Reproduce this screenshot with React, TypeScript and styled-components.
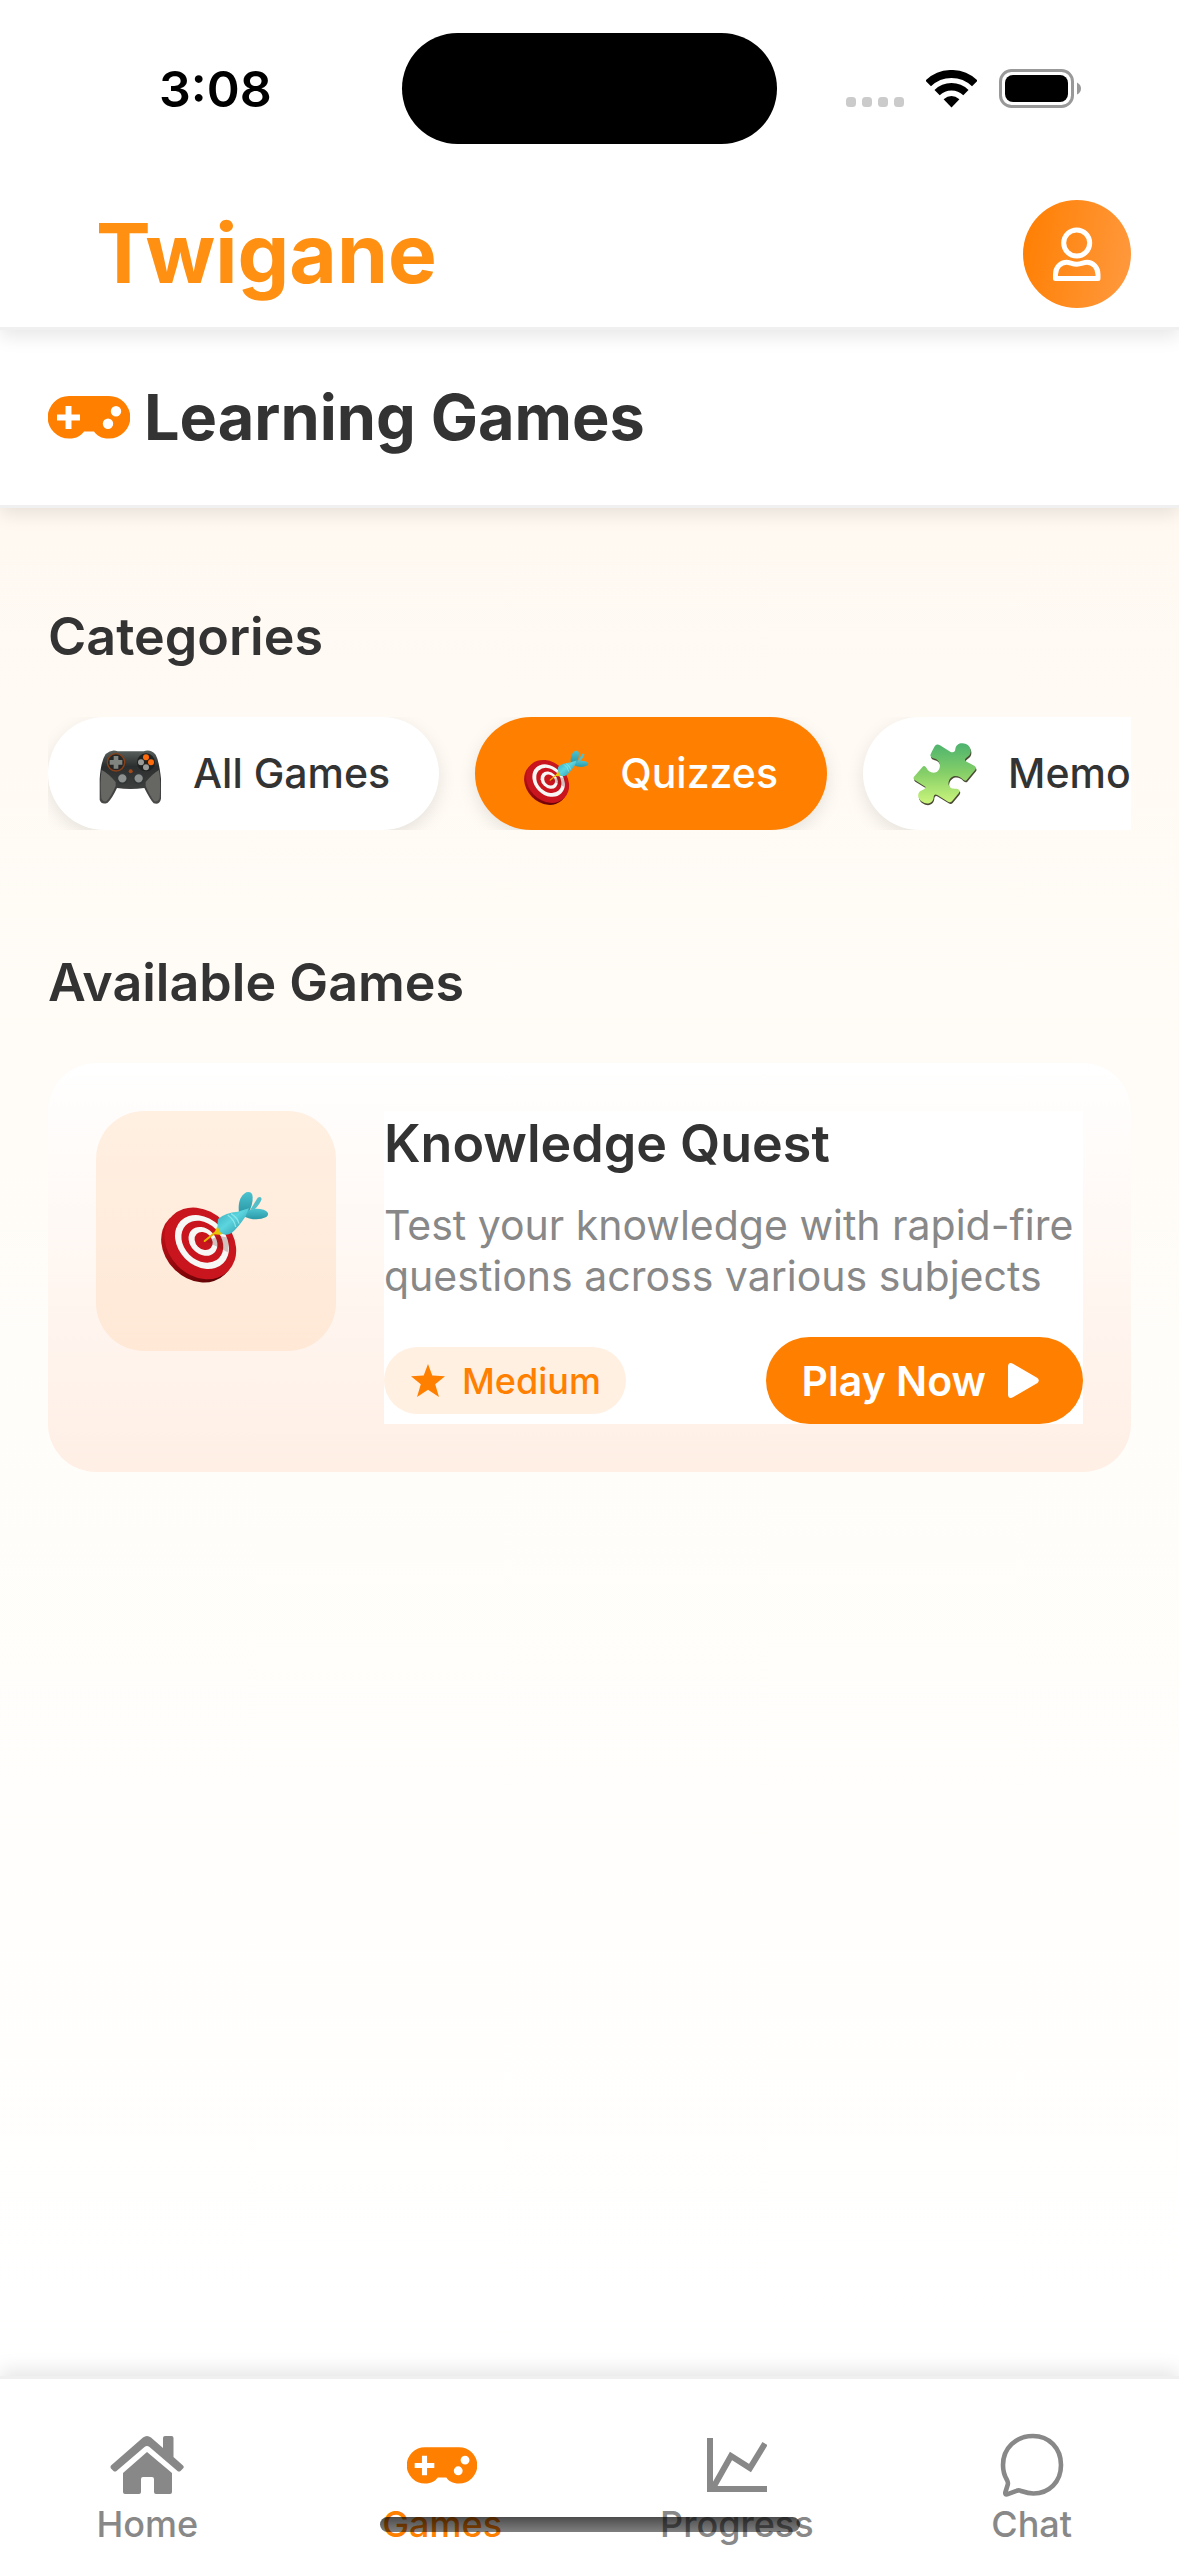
import React, { useState } from "react";
import styled, { createGlobalStyle, css } from "styled-components";

const color = {
  brand: "#ff7f00",
  logo: "#ff9012",
  ink: "#333333",
  muted: "#888888",
  line: "#f0f0f0",
  tint: "#fff0e2",
};

const GlobalStyle = createGlobalStyle`
  *, *::before, *::after { box-sizing: border-box; }
  body { margin: 0; background: #ffffff; }
  body, button { font-family: Inter, "Noto Sans", "Liberation Sans", sans-serif; }
  h1, h2, h3, p { margin: 0; }
  button { border: 0; padding: 0; cursor: pointer; }
  svg { display: block; flex: none; }
`;

const Screen = styled.div`
  display: flex;
  flex-direction: column;
  min-height: 100vh;
  background: #ffffff;
  color: ${color.ink};
`;

const StatusBar = styled.div`
  position: relative;
  z-index: 3;
  display: grid;
  grid-template-columns: 1fr 375px 1fr;
  align-items: center;
  height: 177px;
  background: #ffffff;
`;

const Clock = styled.time`
  padding-left: 159px;
  font-size: 50px;
  font-weight: 600;
  line-height: 60px;
  color: #000000;
`;

const Island = styled.div`
  height: 111px;
  border-radius: 56px;
  background: #000000;
`;

const StatusIcons = styled.div`
  display: flex;
  justify-content: flex-end;
  align-items: flex-end;
  gap: 22px;
  padding-right: 98px;
`;

const bar = css`
  position: relative;
  z-index: 1;
  display: flex;
  align-items: center;
  background: #ffffff;
  border-bottom: 3px solid ${color.line};
  box-shadow: 0 6px 18px rgba(0, 0, 0, 0.1);
`;

const Header = styled.header`
  ${bar}
  z-index: 2;
  justify-content: space-between;
  padding: 23px 48px 19px 96px;
`;

const Brand = styled.span`
  font-size: 82px;
  font-weight: 700;
  line-height: 96px;
  color: ${color.logo};
`;

const Avatar = styled.button`
  width: 108px;
  height: 108px;
  border-radius: 50%;
  background: linear-gradient(100deg, #ff7e00, #ff9a40);
`;

const TitleBar = styled.div`
  ${bar}
  gap: 14px;
  padding: 48px;
`;

const TitleIcon = styled.span`
  color: ${color.brand};
`;

const PageTitle = styled.h1`
  font-size: 63px;
  font-weight: 700;
  line-height: 79px;
`;

const Content = styled.main`
  display: flex;
  flex-direction: column;
  flex: 1;
  gap: 120px;
  padding: 96px 48px;
  background: linear-gradient(180deg, #fff9f2, #fffdf9 45%, #ffffff);
`;

const Section = styled.section`
  display: flex;
  flex-direction: column;
  gap: 48px;
  min-width: 0;
`;

const SectionTitle = styled.h2`
  font-size: 52px;
  font-weight: 600;
  line-height: 65px;
`;

const PillRow = styled.div`
  display: flex;
  gap: 36px;
  overflow: hidden;
`;

const Pill = styled.button<{ $active: boolean }>`
  display: flex;
  flex: none;
  align-items: center;
  gap: 30px;
  height: 113px;
  padding: 0 49px;
  border-radius: 57px;
  background: ${(p) => (p.$active ? color.brand : "#ffffff")};
  color: ${(p) => (p.$active ? "#ffffff" : color.ink)};
  box-shadow: 0 6px 18px rgba(0, 0, 0, 0.1);
  font-size: 41px;
  font-weight: 500;
  line-height: 51px;
`;

const Card = styled.article`
  display: flex;
  align-items: flex-start;
  gap: 48px;
  padding: 48px;
  border-radius: 48px;
  background: linear-gradient(180deg, #ffffff, #ffefe5);
`;

const Thumb = styled.div`
  display: flex;
  flex: none;
  align-items: center;
  justify-content: center;
  width: 240px;
  height: 240px;
  border-radius: 48px;
  background: linear-gradient(180deg, #fff0e2, #ffe8d6);
`;

const Info = styled.div`
  flex: 1;
  min-width: 0;
  background: #ffffff;
`;

const GameTitle = styled.h3`
  font-size: 52px;
  font-weight: 600;
  line-height: 65px;
`;

const Description = styled.p`
  margin: 24px 0 35px;
  font-size: 41px;
  line-height: 51px;
  color: ${color.muted};
`;

const MetaRow = styled.div`
  display: flex;
  align-items: center;
  justify-content: space-between;
`;

const Badge = styled.span`
  display: flex;
  align-items: center;
  gap: 17px;
  height: 67px;
  padding: 0 25px 0 27px;
  border-radius: 36px;
  background: ${color.tint};
  color: ${color.brand};
  font-size: 36px;
  font-weight: 500;
`;

const PlayButton = styled.button`
  display: flex;
  align-items: center;
  gap: 22px;
  height: 87px;
  padding: 0 44px 0 36px;
  border-radius: 44px;
  background: ${color.brand};
  color: #ffffff;
  font-size: 41px;
  font-weight: 600;
`;

const TabBar = styled.nav`
  position: relative;
  z-index: 1;
  display: grid;
  grid-template-columns: repeat(4, 1fr);
  padding: 54px 0 11px;
  background: #ffffff;
  border-top: 3px solid ${color.line};
  box-shadow: 0 -6px 18px rgba(0, 0, 0, 0.1);
`;

const Tab = styled.a<{ $active: boolean }>`
  display: flex;
  flex-direction: column;
  align-items: center;
  gap: 6px;
  color: ${(p) => (p.$active ? color.brand : color.muted)};
  font-size: 36px;
  font-weight: 500;
  line-height: 42px;
  text-decoration: none;
`;

const TabIcon = styled.span`
  display: flex;
  align-items: center;
  height: 64px;
`;

const HomeIndicator = styled.div`
  position: absolute;
  bottom: 24px;
  left: 50%;
  width: 420px;
  height: 15px;
  margin-left: -210px;
  border-radius: 8px;
  background: linear-gradient(180deg, rgba(0, 0, 0, 0.7), rgba(0, 0, 0, 0.5));
`;

const SignalDots = () => (
  <svg width="58" height="11" viewBox="0 0 58 11" fill="#cbcbcb">
    {[0, 16, 32, 48].map((x) => (
      <rect key={x} x={x} y="0" width="10" height="10" rx="3.5" />
    ))}
  </svg>
);

const Wifi = () => (
  <svg width="51" height="38" viewBox="0 0 51 38" fill="none" stroke="#000">
    <path d="M2.2 13.4A33.5 33.5 0 0 1 48.8 13.4" strokeWidth="8" />
    <path d="M11.1 22.6A20.7 20.7 0 0 1 39.9 22.6" strokeWidth="7.5" />
    <path d="M25.5 37.5L17.6 29.3Q25.5 22.5 33.4 29.3Z" fill="#000" stroke="none" />
  </svg>
);

const Battery = () => (
  <svg width="82" height="39" viewBox="0 0 82 39">
    <rect x="1.5" y="1.5" width="72" height="36" rx="11" fill="none" stroke="#999" strokeWidth="3" />
    <rect x="6" y="6" width="63" height="27" rx="8" />
    <path d="M78 13.5Q82 15.5 82 19.5T78 25.5Z" fill="#999" />
  </svg>
);

const UserIcon = () => (
  <svg width="108" height="108" viewBox="0 0 108 108" fill="none" stroke="#fff" strokeWidth="5" strokeLinejoin="round">
    <circle cx="53.7" cy="43" r="13" />
    <path d="M32.5 78.5V74.5C32.5 67 38 62.3 43.5 62.3C47 62.3 49 64.2 53.7 64.2C58.4 64.2 60.4 62.3 64 62.3C69.5 62.3 75 67 75 74.5V78.5Z" />
  </svg>
);

const ControllerIcon = ({ width, height }: { width: number; height: number }) => (
  <svg width={width} height={height} viewBox="0 0 82 43" fill="currentColor">
    <path
      fillRule="evenodd"
      d="M21 0H61A21.3 21.3 0 0 1 61 42.6C53 42.6 49 39.5 46 35.5H36C33 39.5 29 42.6 21 42.6A21.3 21.3 0 0 1 21 0ZM17.5 10V18.5H9V24.5H17.5V33H23.5V24.5H32V18.5H23.5V10ZM68 10A5.2 5.2 0 1 0 68 20.4A5.2 5.2 0 1 0 68 10ZM60 22.5A5.2 5.2 0 1 0 60 32.9A5.2 5.2 0 1 0 60 22.5Z"
    />
  </svg>
);

const HomeIcon = () => (
  <svg width="74" height="60" viewBox="0 0 74 60" fill="currentColor">
    <path d="M1 30.5L33 2.5Q37 -.5 41 2.5L53 13V3Q53 1 55 1H61.5Q63.5 1 63.5 3V22L73 30.5Q74.5 32 73 33.5L70.5 36Q69 37 67.5 36L39.5 12Q37 10 34.5 12L6.5 36Q5 37 3.5 36L1 33.5Q0 32 1 30.5Z" />
    <path d="M37 17L62 38V57Q62 59 60 59H46Q44 59 44 57V44Q44 42 42 42H33Q31 42 31 44V57Q31 59 29 59H15Q13 59 13 57V38Z" />
  </svg>
);

const ChartIcon = () => (
  <svg width="60" height="60" viewBox="0 0 60 60" fill="none" stroke="currentColor" strokeWidth="6">
    <path d="M3 3V54H60" />
    <path d="M6.5 52L24 21L43 33L58 8.5" />
  </svg>
);

const ChatIcon = () => (
  <svg width="64" height="64" viewBox="0 0 64 64" fill="none" stroke="currentColor" strokeWidth="4.6" strokeLinejoin="round">
    <path d="M33 3C49 3 61 15 61 32C61 49 49 60.5 33.5 60.5C27 60.5 23 58.5 20.5 57.7Q18.5 57 16.5 57.8L7 61.3Q5 61.8 5.3 59.5L7.8 51.5Q8.3 49.5 7 47C4 42 3 37 3 32C3 15 16 3 33 3Z" />
  </svg>
);

const StarIcon = () => (
  <svg width="34" height="33" viewBox="0 0 34 33" fill="currentColor">
    <path d="M17 0L21.3 11.5L34 12.3L24.2 20.2L28 33L17 25.7L6 33L9.8 20.2L0 12.3L12.7 11.5Z" />
  </svg>
);

const PlayIcon = () => (
  <svg width="31" height="35" viewBox="0 0 31 35" fill="currentColor">
    <path d="M0 4Q0 -1.5 5 .8L29.5 15Q32 17.5 29.5 20L5 34.2Q0 36.5 0 31Z" />
  </svg>
);

const GamepadEmoji = () => (
  <svg width="66" height="66" viewBox="36 37 198 198" role="img" aria-label="gamepad">
    <defs>
      <linearGradient id="padBody" x1="0" y1="0" x2="0" y2="1">
        <stop offset="0" stopColor="#58605c" />
        <stop offset=".3" stopColor="#2b2e2e" />
        <stop offset="1" stopColor="#4a4b49" />
      </linearGradient>
    </defs>
    <path
      fill="url(#padBody)"
      d="M62 76Q80 60 98 68H176Q196 60 212 78Q222 96 228 150V210Q224 230 206 224Q196 214 178 178Q136 184 96 178Q80 212 68 222Q50 230 44 214V150Q48 96 62 76Z"
    />
    <path fill="#666762" d="M50 124Q70 134 92 160V172Q78 204 64 218Q52 220 49 208Q44 160 50 124ZM222 124Q204 134 182 160V172Q196 204 208 218Q220 220 224 208Q228 160 222 124Z" />
    <circle cx="93" cy="101" r="26" fill="#252727" stroke="#884019" strokeWidth="4" />
    <path fill="#818580" d="M86 82H100V94H112V108H100V120H86V108H74V94H86Z" />
    <circle cx="183" cy="101" r="27" fill="#202222" />
    <circle cx="183" cy="86" r="9" fill="#ff6b0b" />
    <circle cx="198" cy="101" r="9" fill="#ff6b0b" />
    <circle cx="168" cy="101" r="9" fill="#999b99" />
    <circle cx="183" cy="116" r="9" fill="#999b99" />
    <circle cx="137" cy="128" r="6" fill="#a54818" />
    <circle cx="112" cy="149" r="15" fill="#8d9290" stroke="#333636" strokeWidth="5" />
    <circle cx="161" cy="149" r="15" fill="#8d9290" stroke="#333636" strokeWidth="5" />
  </svg>
);

const TargetEmoji = ({ size, id }: { size: number; id: string }) => (
  <svg width={size} height={size} viewBox="32 -9 330 330" role="img" aria-label="dart on a target">
    <defs>
      <linearGradient id={`${id}-dart`} x1="0" y1="0" x2="1" y2="1">
        <stop offset="0" stopColor="#35aab8" />
        <stop offset=".45" stopColor="#5cd5df" />
        <stop offset="1" stopColor="#238b9c" />
      </linearGradient>
      <linearGradient id={`${id}-fin`} x1="0" y1="0" x2="0" y2="1">
        <stop offset="0" stopColor="#4cc3cf" />
        <stop offset="1" stopColor="#2b98a6" />
      </linearGradient>
      <linearGradient id={`${id}-rim`} x1="0" y1="0" x2="1" y2="0">
        <stop offset="0" stopColor="#c01219" />
        <stop offset=".6" stopColor="#860609" />
        <stop offset="1" stopColor="#5c0507" />
      </linearGradient>
    </defs>
    <ellipse cx="140" cy="203" rx="118" ry="96" transform="rotate(45 140 203)" fill={`url(#${id}-rim)`} />
    <ellipse cx="150" cy="193" rx="118" ry="96" transform="rotate(45 150 193)" fill="#c9151d" />
    <ellipse cx="155" cy="189" rx="90" ry="71" transform="rotate(45 155 189)" fill="#f7f7f5" />
    <ellipse cx="156" cy="188" rx="70" ry="55" transform="rotate(45 156 188)" fill="#c9151d" />
    <ellipse cx="158" cy="187" rx="48" ry="38" transform="rotate(45 158 187)" fill="#f7f7f5" />
    <ellipse cx="160" cy="186" rx="30" ry="24" transform="rotate(45 160 186)" fill="#c9151d" />
    <path d="M168 188L206 170L240 178L232 220Q206 204 168 188Z" fill="#651b1d" opacity=".25" />
    <path d="M163 186L200 156" stroke="#e7b600" strokeWidth="6" strokeLinecap="round" />
    <path d="M190 166L204 136L220 164L208 167Z" fill="#e8c307" />
    <path d="M300 92L322 56Q332 50 334 60Q330 74 312 92Z" fill="#55bfc9" />
    <path d="M266 102Q260 56 288 40Q306 36 307 54Q308 78 294 102Z" fill={`url(#${id}-fin)`} />
    <path d="M276 110Q298 82 340 92Q362 102 348 114Q316 130 276 110Z" fill={`url(#${id}-fin)`} />
    <path d="M203 120Q226 100 262 98L296 88L286 112Q262 148 244 162Q226 172 212 162Q198 144 203 120Z" fill={`url(#${id}-dart)`} />
    <path d="M232 108Q252 122 256 144M242 104Q262 116 266 134" fill="none" stroke="#9aecf0" strokeWidth="4" opacity=".8" />
  </svg>
);

const puzzlePath =
  "M105 45Q112 38 120 44L152 64Q165 68 166 55C168 38 185 34 198 40C215 48 216 68 205 77C196 84 190 88 200 93L224 106Q230 111 226 117L200 148Q196 153 188 146C180 136 165 132 155 140C142 150 143 166 153 172C162 176 172 172 178 178Q180 182 176 188L156 212Q151 217 144 213L112 193Q103 188 101 198C101 213 88 222 74 217C56 211 50 194 58 184C64 177 78 178 76 168L44 148Q38 144 42 138L68 108Q72 103 78 110C84 124 98 130 110 124C122 116 123 98 112 88C104 82 92 84 91 74Q92 68 105 45Z";

const PuzzleEmoji = () => (
  <svg width="66" height="66" viewBox="36 31 198 198" role="img" aria-label="puzzle piece">
    <defs>
      <linearGradient id="puzzleFill" x1="0" y1="0" x2="0" y2="1">
        <stop offset="0" stopColor="#4db36e" />
        <stop offset=".5" stopColor="#86cf68" />
        <stop offset="1" stopColor="#cbf57c" />
      </linearGradient>
    </defs>
    <path d={puzzlePath} transform="translate(2 5)" fill="#4b4a35" />
    <path d={puzzlePath} fill="url(#puzzleFill)" />
  </svg>
);

const categories = [
  { name: "All Games", icon: <GamepadEmoji /> },
  { name: "Quizzes", icon: <TargetEmoji size={66} id="pill" /> },
  { name: "Memory", icon: <PuzzleEmoji /> },
];

const tabs = [
  { name: "Home", icon: <HomeIcon /> },
  { name: "Games", icon: <ControllerIcon width={70} height={37} /> },
  { name: "Progress", icon: <ChartIcon /> },
  { name: "Chat", icon: <ChatIcon /> },
];

export default function App() {
  const [category, setCategory] = useState("Quizzes");

  return (
    <Screen>
      <GlobalStyle />
      <StatusBar>
        <Clock>3:08</Clock>
        <Island />
        <StatusIcons>
          <SignalDots />
          <Wifi />
          <Battery />
        </StatusIcons>
      </StatusBar>

      <Header>
        <Brand>Twigane</Brand>
        <Avatar aria-label="Profile">
          <UserIcon />
        </Avatar>
      </Header>

      <TitleBar>
        <TitleIcon>
          <ControllerIcon width={82} height={43} />
        </TitleIcon>
        <PageTitle>Learning Games</PageTitle>
      </TitleBar>

      <Content>
        <Section>
          <SectionTitle>Categories</SectionTitle>
          <PillRow>
            {categories.map((c) => (
              <Pill
                key={c.name}
                $active={c.name === category}
                aria-pressed={c.name === category}
                onClick={() => setCategory(c.name)}
              >
                {c.icon}
                {c.name}
              </Pill>
            ))}
          </PillRow>
        </Section>

        <Section>
          <SectionTitle>Available Games</SectionTitle>
          <Card>
            <Thumb>
              <TargetEmoji size={110} id="card" />
            </Thumb>
            <Info>
              <GameTitle>Knowledge Quest</GameTitle>
              <Description>Test your knowledge with rapid-fire questions across various subjects</Description>
              <MetaRow>
                <Badge>
                  <StarIcon />
                  Medium
                </Badge>
                <PlayButton>
                  Play Now
                  <PlayIcon />
                </PlayButton>
              </MetaRow>
            </Info>
          </Card>
        </Section>
      </Content>

      <TabBar>
        {tabs.map((t) => (
          <Tab key={t.name} href={`#${t.name.toLowerCase()}`} $active={t.name === "Games"}>
            <TabIcon>{t.icon}</TabIcon>
            {t.name}
          </Tab>
        ))}
        <HomeIndicator />
      </TabBar>
    </Screen>
  );
}
